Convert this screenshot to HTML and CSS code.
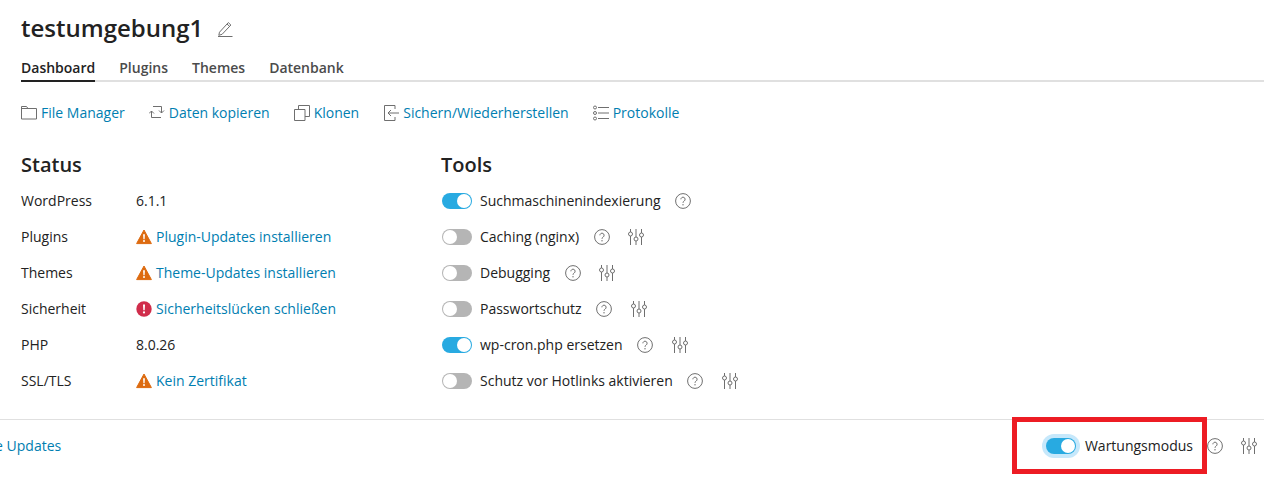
FILE: index.html
```html
<!DOCTYPE html>
<html lang="de">
<head>
<meta charset="utf-8">
<title>testumgebung1</title>
<link rel="stylesheet" href="styles.css">
</head>
<body>
<svg class="defs" width="0" height="0" aria-hidden="true">
  <symbol id="help" viewBox="0 0 16 16">
    <circle cx="8" cy="8" r="7.400" fill="none" stroke="#6f6f6f" stroke-width="1"/>
    <path d="M5.900 6.300a2.100 2.100 0 1 1 3.300 1.700c-.8.5-1.200.9-1.200 1.800" fill="none" stroke="#6f6f6f" stroke-width="1"/>
    <circle cx="8" cy="11.700" r=".7" fill="#6f6f6f"/>
  </symbol>
  <symbol id="tune" viewBox="0 0 16 16">
    <g fill="none" stroke="#6f6f6f" stroke-width="1">
      <path d="M2.500 0v3M2.500 7v9M8 0v8M8 12v4M13.500 0v4M13.500 8v8"/>
      <circle cx="2.500" cy="5" r="2"/><circle cx="8" cy="10" r="2"/><circle cx="13.500" cy="6" r="2"/>
    </g>
  </symbol>
  <symbol id="warn" viewBox="0 0 16 16">
    <path d="M8 1 15.400 14.600H.6z" fill="#dd6b10" stroke="#dd6b10" stroke-width="1" stroke-linejoin="round"/>
    <path d="M7.100 5.200h1.800l-.3 5H7.400z" fill="#fff"/><circle cx="8" cy="12.100" r="1" fill="#fff"/>
  </symbol>
  <symbol id="err" viewBox="0 0 16 16">
    <circle cx="8" cy="8" r="7.700" fill="#d02d4b"/>
    <path d="M7 3.500h2l-.3 5.700H7.300z" fill="#fff"/><circle cx="8" cy="11.400" r="1.100" fill="#fff"/>
  </symbol>
</svg>

<main class="page">
  <header class="title-row">
    <h1 class="title">testumgebung1</h1>
    <svg class="edit" width="16" height="16" viewBox="0 0 16 16"><path d="M2.500 11.200 11.300 1.600l2.600 2.400-8.800 9.300-3.300 1zM10 3l2.600 2.400M1 15.500h14.500" fill="none" stroke="#6f6f6f"/></svg>
  </header>

  <nav class="tabs">
    <a class="tab tab-active">Dashboard</a>
    <a class="tab">Plugins</a>
    <a class="tab">Themes</a>
    <a class="tab">Datenbank</a>
  </nav>

  <div class="actions">
    <a class="action">
      <svg width="16" height="16" viewBox="0 0 16 16"><path d="M.5 1.500h5l1.500 2h8.500v10.500H.5zM.5 3.500H7" fill="none" stroke="#6f6f6f"/></svg>
      File Manager
    </a>
    <a class="action">
      <svg width="16" height="16" viewBox="0 0 16 16"><path d="M4 1.500h8.500V8M10 5.500l2.500 2.500L15 5.500M12 12.500H2.500V6M0 8.500 2.500 6 5 8.500" fill="none" stroke="#6f6f6f"/></svg>
      Daten kopieren
    </a>
    <a class="action">
      <svg width="16" height="16" viewBox="0 0 16 16"><path d="M.5 4.500h10.500v11H.5zM4.500 4.500V.5h11v11H11" fill="none" stroke="#6f6f6f"/></svg>
      Klonen
    </a>
    <a class="action">
      <svg width="16" height="16" viewBox="0 0 16 16"><path d="M12 .5H1.500v15H12V12M12 .5V4M16 8H5M8 5 5 8l3 3" fill="none" stroke="#6f6f6f"/></svg>
      Sichern/Wiederherstellen
    </a>
    <a class="action">
      <svg width="16" height="16" viewBox="0 0 16 16"><path d="M5 2.500h11M5 8h11M5 13.500h11" stroke="#6f6f6f" fill="none"/><circle cx="2" cy="2.500" r="1.500" fill="none" stroke="#6f6f6f"/><circle cx="2" cy="8" r="1.500" fill="none" stroke="#6f6f6f"/><circle cx="2" cy="13.500" r="1.500" fill="none" stroke="#6f6f6f"/></svg>
      Protokolle
    </a>
  </div>

  <div class="columns">
    <section class="status">
      <h2 class="heading">Status</h2>
      <div class="row"><span class="label">WordPress</span><span>6.1.1</span></div>
      <div class="row"><span class="label">Plugins</span><svg class="state"><use href="#warn"/></svg><a class="link">Plugin-Updates installieren</a></div>
      <div class="row"><span class="label">Themes</span><svg class="state"><use href="#warn"/></svg><a class="link">Theme-Updates installieren</a></div>
      <div class="row"><span class="label">Sicherheit</span><svg class="state"><use href="#err"/></svg><a class="link">Sicherheitslücken schließen</a></div>
      <div class="row"><span class="label">PHP</span><span>8.0.26</span></div>
      <div class="row"><span class="label">SSL/TLS</span><svg class="state"><use href="#warn"/></svg><a class="link">Kein Zertifikat</a></div>
    </section>
    <section class="tools">
      <h2 class="heading">Tools</h2>
      <div class="row"><span class="toggle on"></span><span class="tool-name">Suchmaschinenindexierung</span><svg class="ico help"><use href="#help"/></svg></div>
      <div class="row"><span class="toggle"></span><span class="tool-name">Caching (nginx)</span><svg class="ico help"><use href="#help"/></svg><svg class="ico tune"><use href="#tune"/></svg></div>
      <div class="row"><span class="toggle"></span><span class="tool-name">Debugging</span><svg class="ico help"><use href="#help"/></svg><svg class="ico tune"><use href="#tune"/></svg></div>
      <div class="row"><span class="toggle"></span><span class="tool-name">Passwortschutz</span><svg class="ico help"><use href="#help"/></svg><svg class="ico tune"><use href="#tune"/></svg></div>
      <div class="row"><span class="toggle on"></span><span class="tool-name">wp-cron.php ersetzen</span><svg class="ico help"><use href="#help"/></svg><svg class="ico tune"><use href="#tune"/></svg></div>
      <div class="row"><span class="toggle"></span><span class="tool-name">Schutz vor Hotlinks aktivieren</span><svg class="ico help"><use href="#help"/></svg><svg class="ico tune"><use href="#tune"/></svg></div>
    </section>
  </div>

  <footer class="footer">
    <a class="link footer-link">Automatische Updates</a>
    <div class="maintenance">
      <span class="toggle on focus"></span>
      <span class="maintenance-name">Wartungsmodus</span>
      <svg class="ico foot-help"><use href="#help"/></svg>
      <svg class="ico foot-tune"><use href="#tune"/></svg>
    </div>
  </footer>
</main>
<div class="annotation"></div>
</body>
</html>
```
FILE: styles.css
```css
* { box-sizing: border-box; }
html, body { margin: 0; height: 481px; overflow: hidden; background: #fff; }
body { font: 14px/20px "Open Sans", sans-serif; color: #222; position: relative; }
.defs { position: absolute; }
.page { width: 1264px; }
.title-row { display: flex; align-items: center; height: 30px; margin: 13px 0 0 21px; }
.title { margin: 0; font-size: 24px; line-height: 30px; font-weight: 600; color: #222; }
.edit { margin-left: 14px; margin-top: 1px; }
.tabs { display: flex; gap: 24px; margin: 15px 0 0 21px; border-bottom: 2px solid #e0e0e0; height: 24px; }
.tab { font-weight: 600; color: #4b4b4b; height: 24px; line-height: 20px; }
.tab-active { color: #222; border-bottom: 2px solid #222; }
.actions { display: flex; gap: 24px; margin: 21px 0 0 21px; height: 20px; }
.action { display: flex; align-items: center; gap: 4px; color: #007eb1; white-space: nowrap; }
.columns { display: flex; margin: 28px 0 0 21px; }
.status { width: 420px; }
.heading { margin: 0 0 4px; font-size: 20px; line-height: 28px; font-weight: 600; color: #222; }
.row { display: flex; align-items: center; height: 36px; white-space: nowrap; }
.label { width: 115px; }
.state { width: 16px; height: 16px; margin: 0 4px 0 0; }
.link { color: #007eb1; }
.toggle { position: relative; display: block; flex: none; width: 30px; height: 16px; border-radius: 8px; background: #b5b5b5; margin: 0 8px 0 1px; }
.toggle::after { content: ""; position: absolute; top: 1px; left: 1px; width: 14px; height: 14px; border-radius: 50%; background: #fff; }
.toggle.on { background: #28aae1; }
.toggle.on::after { left: 15px; }
.toggle.focus { margin: 0; box-shadow: 0 0 0 4px #c6e8fb; }
.ico { display: block; flex: none; width: 16px; height: 16px; }
.help { margin-left: 14.5px; }
.tune { margin-left: 18.5px; }
.footer { display: flex; justify-content: space-between; align-items: center; height: 53px; margin-top: 20px; border-top: 1px solid #e0e0e0; padding-right: 7px; }
.footer-link { margin-left: -87px; white-space: nowrap; }
.maintenance { display: flex; align-items: center; }
.maintenance-name { margin-left: 9px; }
.foot-help { margin-left: 14px; }
.foot-tune { margin-left: 18px; }
.annotation { position: absolute; left: 1012px; top: 417px; width: 195px; height: 57px; border: 5px solid #ed1c24; }
```
